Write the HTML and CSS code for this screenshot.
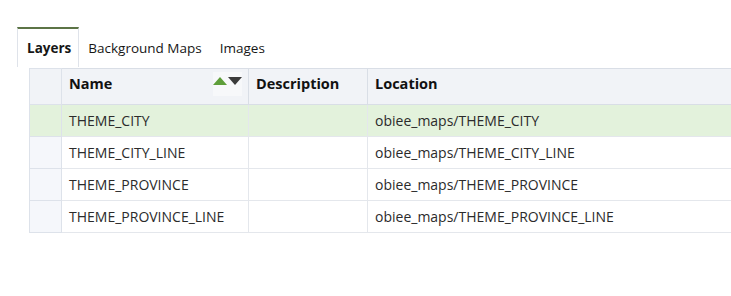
FILE: index.html
```html
<!DOCTYPE html>
<html lang="en">
<head>
  <meta charset="UTF-8">
  <title>Map Layers</title>
  <link rel="stylesheet" href="styles.css">
</head>
<body>
  <div class="tabs">
    <div class="tab active">Layers</div>
    <div class="tab">Background Maps</div>
    <div class="tab">Images</div>
  </div>
  <table class="grid">
    <thead>
      <tr>
        <th class="sel"></th>
        <th class="name">
          <div class="th-wrap">
            <span>Name</span>
            <span class="sort">
              <span class="up"></span>
              <span class="down"></span>
            </span>
          </div>
        </th>
        <th class="desc">Description</th>
        <th class="loc">Location</th>
      </tr>
    </thead>
    <tbody>
      <tr class="selected">
        <td class="sel"></td>
        <td>THEME_CITY</td>
        <td></td>
        <td>obiee_maps/THEME_CITY</td>
      </tr>
      <tr>
        <td class="sel"></td>
        <td>THEME_CITY_LINE</td>
        <td></td>
        <td>obiee_maps/THEME_CITY_LINE</td>
      </tr>
      <tr>
        <td class="sel"></td>
        <td>THEME_PROVINCE</td>
        <td></td>
        <td>obiee_maps/THEME_PROVINCE</td>
      </tr>
      <tr>
        <td class="sel"></td>
        <td>THEME_PROVINCE_LINE</td>
        <td></td>
        <td>obiee_maps/THEME_PROVINCE_LINE</td>
      </tr>
    </tbody>
  </table>
</body>
</html>
```

FILE: styles.css
```css
body {
  margin: 0;
  padding: 0;
  font-family: 'Open Sans', 'Noto Sans', sans-serif;
  font-size: 14px;
  color: #333;
  background: #fff;
  overflow: hidden;
  width: 731px;
  height: 296px;
}

.tabs {
  display: flex;
  margin: 27px 0 0 17px;
  height: 40px;
}

.tab {
  padding: 12px 9px 0 9px;
  color: #161616;
  font-size: 13.5px;
}

.tab.active {
  font-weight: bold;
  border-top: 2px solid #5c7446;
  border-left: 1px solid #dfe3ea;
  border-right: 1px solid #dfe3ea;
  padding: 10px 7px 0 9px;
}

.grid {
  margin-left: 29px;
  margin-top: 1px;
  border-collapse: collapse;
  table-layout: fixed;
  width: 760px;
}

.grid th, .grid td {
  border: 1px solid #e4e7ec;
  text-align: left;
  padding: 0 7px;
  white-space: nowrap;
}

.grid th {
  background: #f1f3f7;
  border-color: #d9dee6;
  height: 29px;
  padding-bottom: 6px;
  font-weight: bold;
  color: #111;
  font-size: 14.5px;
}

.grid td {
  height: 31px;
  color: #2b2b2b;
}

.grid .sel {
  width: 17px;
  background: #f5f7fb;
  border-color: #dde2ea;
}

.grid th.sel {
  background: #f1f3f7;
}

.grid .name { width: 172px; }
.grid .desc { width: 104px; }

.grid tr.selected td {
  background: #e3f2dc;
}

.th-wrap {
  display: flex;
  align-items: center;
  justify-content: space-between;
}

.sort {
  display: flex;
  align-items: flex-start;
  gap: 1px;
  background: #f7f8fa;
  padding: 5px 0 11px 0;
  margin: 0 -1px 0 0;
}

.sort .up {
  width: 0;
  height: 0;
  border-left: 7.5px solid transparent;
  border-right: 7.5px solid transparent;
  border-bottom: 8px solid #5e9e3a;
}

.sort .down {
  width: 0;
  height: 0;
  border-left: 7.5px solid transparent;
  border-right: 7.5px solid transparent;
  border-top: 8px solid #3b3b3b;
}
```
